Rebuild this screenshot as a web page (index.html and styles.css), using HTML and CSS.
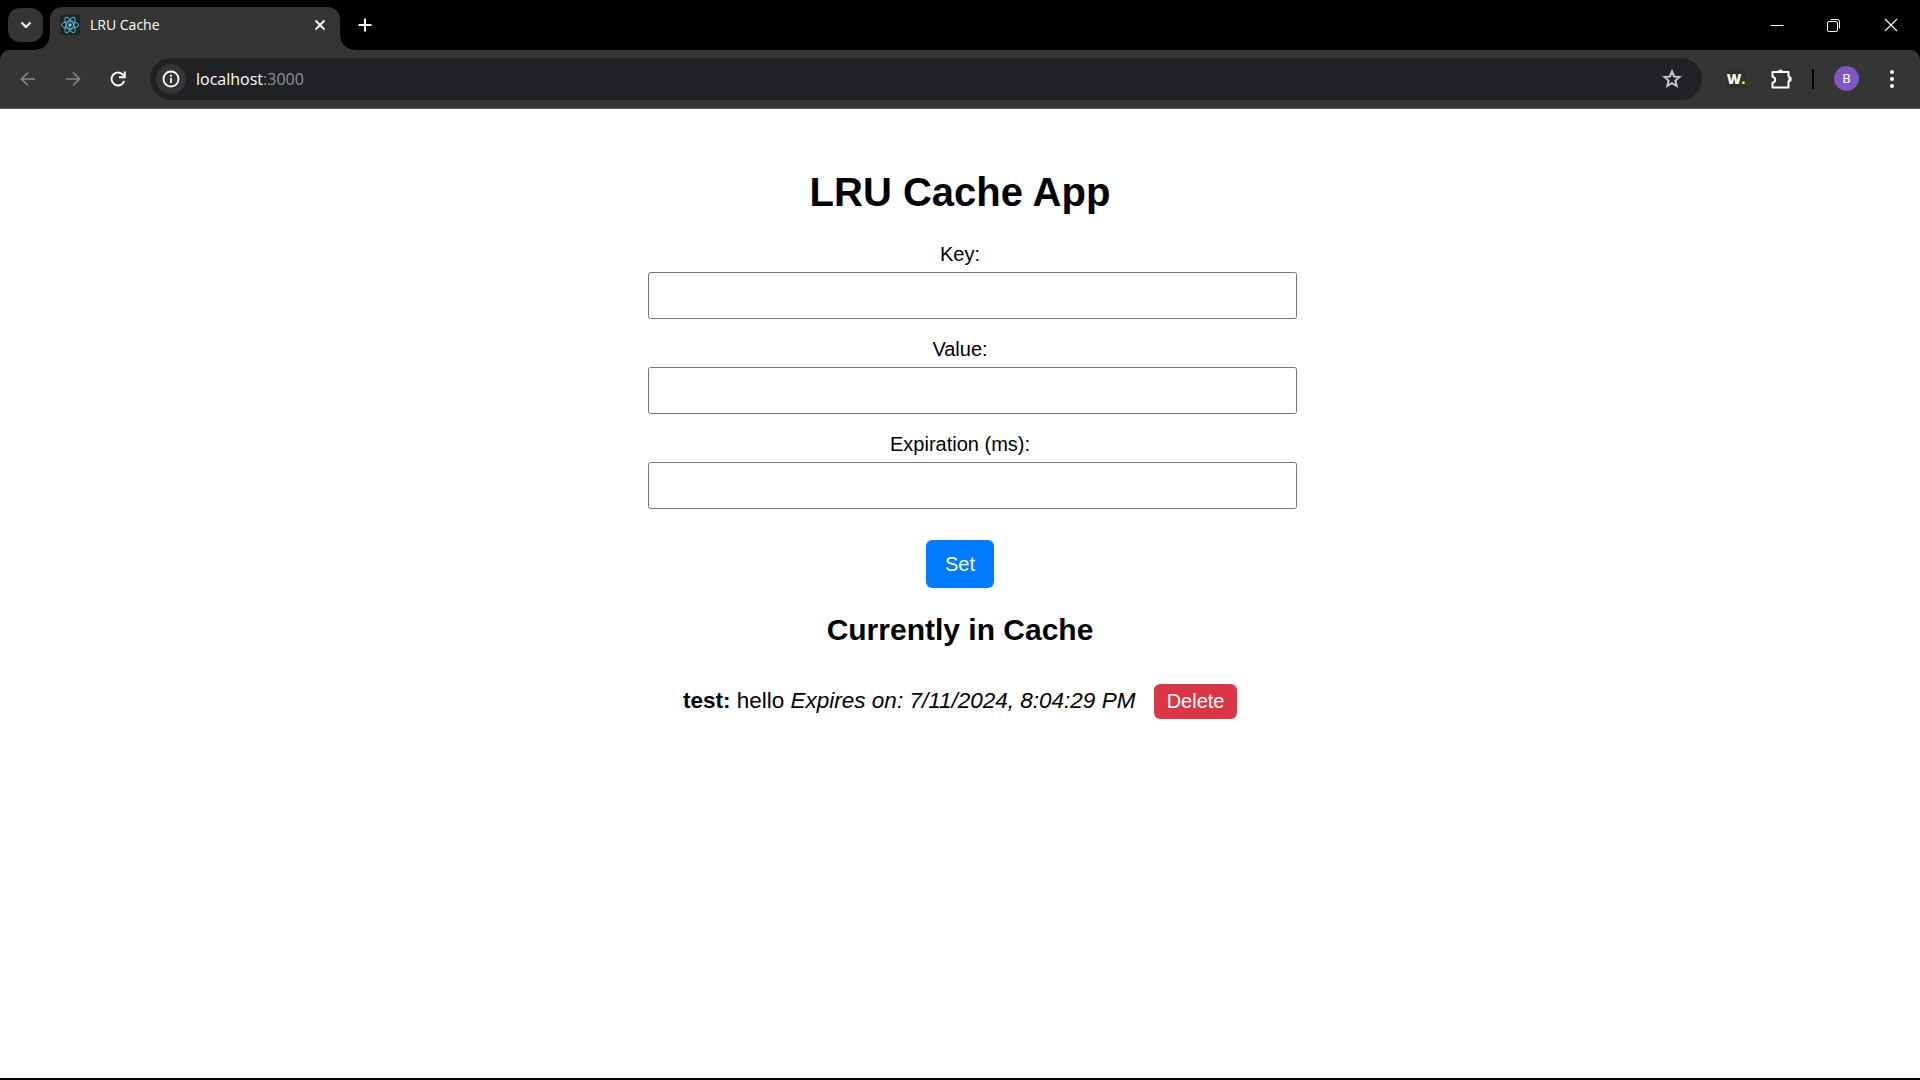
FILE: index.html
```html
<!DOCTYPE html>
<html lang="en">
<head>
<meta charset="utf-8">
<title>LRU Cache</title>
<link rel="stylesheet" href="styles.css">
</head>
<body>
<header class="browser">
  <div class="tabstrip">
    <button class="tab-search" aria-label="Search tabs">
      <svg width="12" height="8" viewBox="0 0 12 8"><path d="M1.5 1.5 6 6l4.500-4.500" fill="none" stroke="#fff" stroke-width="2.200"/></svg>
    </button>
    <div class="tab">
      <svg class="favicon" width="20" height="20" viewBox="0 0 20 20">
        <rect width="20" height="20" rx="1" fill="#222426"/>
        <g fill="none" stroke="#52b4d0" stroke-width="1">
          <ellipse cx="10" cy="10" rx="8.600" ry="3.400"/>
          <ellipse cx="10" cy="10" rx="8.600" ry="3.400" transform="rotate(60 10 10)"/>
          <ellipse cx="10" cy="10" rx="8.600" ry="3.400" transform="rotate(120 10 10)"/>
        </g>
        <circle cx="10" cy="10" r="1.700" fill="#61dafb"/>
      </svg>
      <span class="tab-title">LRU Cache</span>
      <button class="icon-button" aria-label="Close tab">
        <svg width="12" height="12" viewBox="0 0 12 12"><path d="M1.500 1.500l9 9M10.500 1.500l-9 9" stroke="#fff" stroke-width="1.800"/></svg>
      </button>
    </div>
    <button class="icon-button new-tab" aria-label="New tab">
      <svg width="14" height="14" viewBox="0 0 14 14"><path d="M7 .5v13M.5 7h13" stroke="#fff" stroke-width="2"/></svg>
    </button>
    <div class="window-controls">
      <button class="icon-button" aria-label="Minimize">
        <svg width="14" height="14" viewBox="0 0 14 14"><path d="M.5 7.500h13" stroke="#fff"/></svg>
      </button>
      <button class="icon-button" aria-label="Restore">
        <svg width="14" height="14" viewBox="0 0 14 14" fill="none" stroke="#fff"><rect x=".5" y="3.500" width="10" height="10" rx="1.500"/><path d="M3.500 1.500H10.500a2 2 0 0 1 2 2v7"/></svg>
      </button>
      <button class="icon-button" aria-label="Close">
        <svg width="14" height="14" viewBox="0 0 14 14"><path d="M1 1l12 12M13 1 1 13" stroke="#fff" stroke-width="1.100"/></svg>
      </button>
    </div>
  </div>
  <div class="toolbar">
    <nav class="history">
      <button class="icon-button" aria-label="Back">
        <svg width="16" height="16" viewBox="0 0 16 16" fill="none" stroke="#858585" stroke-width="1.700"><path d="M15 8H2M8 1.500 1.500 8 8 14.500"/></svg>
      </button>
      <button class="icon-button" aria-label="Forward">
        <svg width="16" height="16" viewBox="0 0 16 16" fill="none" stroke="#858585" stroke-width="1.700"><path d="M1 8h13M8 1.500 14.500 8 8 14.500"/></svg>
      </button>
      <button class="icon-button" aria-label="Reload">
        <svg width="18" height="18" viewBox="0 0 18 18" fill="none" stroke="#fff" stroke-width="2"><path d="M15.200 11A6.500 6.500 0 1 1 14 4.700l1.500 1.800"/><path d="M15.800 1.500v5.700H10" /></svg>
      </button>
    </nav>
    <div class="address">
      <button class="site-info" aria-label="Site information">
        <svg width="18" height="18" viewBox="0 0 18 18"><circle cx="9" cy="9" r="7.500" fill="none" stroke="#fff" stroke-width="1.800"/><path d="M9 8v5M9 4.800v1.900" stroke="#fff" stroke-width="1.800"/></svg>
      </button>
      <span class="url">localhost<span class="port">:3000</span></span>
      <button class="icon-button" aria-label="Bookmark this tab">
        <svg width="20" height="20" viewBox="0 0 20 20"><path d="M10 2.500l2.100 5 5.400.5-4.100 3.600 1.300 5.400L10 14.200l-4.700 2.800 1.300-5.400L2.500 8l5.400-.5z" fill="none" stroke="#c7c7c7" stroke-width="2"/></svg>
      </button>
    </div>
    <div class="extensions">
      <button class="icon-button extension" aria-label="W extension">W<span class="dot">.</span></button>
      <button class="icon-button" aria-label="Extensions">
        <svg width="22" height="22" viewBox="0 0 22 22"><path d="M2.500 4h16v4.800a2.200 2.200 0 0 1 0 4.400V19.500h-16v-4.800c3.600-.6 3.600-5.400 0-6z" fill="none" stroke="#fff" stroke-width="2" stroke-linejoin="round"/><path d="M8 4a2.500 2.500 0 0 1 5 0zM18.500 8.500a2.500 2.500 0 0 1 0 5z" fill="#fff"/></svg>
      </button>
      <span class="divider"></span>
      <button class="icon-button avatar" aria-label="Profile">B</button>
      <button class="icon-button" aria-label="Menu">
        <svg width="6" height="20" viewBox="0 0 6 20" fill="#fff"><circle cx="3" cy="3" r="2"/><circle cx="3" cy="10" r="2"/><circle cx="3" cy="17" r="2"/></svg>
      </button>
    </div>
  </div>
</header>
<main class="app">
  <h1>LRU Cache App</h1>
  <form class="cache-form">
    <div class="field"><label for="key">Key:</label><input id="key" type="text"></div>
    <div class="field"><label for="value">Value:</label><input id="value" type="text"></div>
    <div class="field"><label for="expiration">Expiration (ms):</label><input id="expiration" type="text"></div>
    <button class="set" type="button">Set</button>
  </form>
  <h2>Currently in Cache</h2>
  <ul class="entries">
    <li><strong>test:</strong> hello <em>Expires on: 7/11/2024, 8:04:29 PM</em> <button class="delete" type="button">Delete</button></li>
  </ul>
</main>
</body>
</html>
```
FILE: styles.css
```css
* { box-sizing: border-box; }

body {
  margin: 0;
  min-height: 100vh;
  display: flex;
  flex-direction: column;
  background: #fff;
  border-bottom: 2px solid #000;
  font-family: "Liberation Sans", Arial, sans-serif;
}

button { font-family: inherit; border: 0; cursor: pointer; }

/* Browser frame */
.browser {
  background: #000;
  color: #fff;
  font-family: "Open Sans", "Noto Sans", sans-serif;
}

.icon-button {
  display: flex;
  flex: none;
  align-items: center;
  justify-content: center;
  padding: 0;
  background: none;
  color: #fff;
}

.tabstrip {
  display: flex;
  align-items: center;
  height: 50px;
  padding: 0 1px 0 8px;
}

.tab-search {
  display: flex;
  align-items: center;
  justify-content: center;
  width: 35px;
  height: 34px;
  margin-right: 7px;
  padding: 0;
  border-radius: 12px;
  background: #353535;
}

.tab {
  position: relative;
  align-self: flex-end;
  display: flex;
  align-items: center;
  gap: 10px;
  width: 290px;
  height: 43px;
  padding: 0 14px 7px 10px;
  border-radius: 12px 12px 0 0;
  background: #353535;
}

/* Curved feet joining the tab to the toolbar */
.tab::before,
.tab::after {
  content: "";
  position: absolute;
  bottom: 0;
  width: 14px;
  height: 14px;
}
.tab::before { right: 100%; background: radial-gradient(circle at 0 0, transparent 13px, #353535 14px); }
.tab::after { left: 100%; background: radial-gradient(circle at 100% 0, transparent 13px, #353535 14px); }

.tab-title { flex: 1; font-size: 14px; line-height: 20px; }

.new-tab { width: 50px; height: 34px; }

.window-controls { display: flex; margin-left: auto; }
.window-controls .icon-button { width: 57px; height: 50px; }

.toolbar {
  display: flex;
  align-items: center;
  height: 59px;
  padding: 0 16px 1px 11px;
  border-radius: 10px 10px 0 0;
  border-bottom: 1px solid #5c5c5c;
  background: #353535;
}

.history { display: flex; gap: 12px; margin-right: 16px; }
.history .icon-button { width: 33px; height: 34px; }

.address {
  flex: 1;
  display: flex;
  align-items: center;
  height: 42px;
  padding: 0 20px 0 6px;
  border-radius: 21px;
  background: #202124;
}

.site-info {
  display: flex;
  align-items: center;
  justify-content: center;
  width: 30px;
  height: 30px;
  margin-right: 10px;
  padding: 0;
  border-radius: 50%;
  background: #353535;
}

.url { flex: 1; font-size: 16px; line-height: 24px; }
.port { color: #8e9196; }

.extensions { display: flex; align-items: center; margin-left: 24px; }
.extension {
  width: 20px;
  height: 20px;
  margin-right: 24px;
  background: #303030;
  font-size: 14px;
  font-weight: 800;
}
.dot { color: #f4ee2a; }
.divider { width: 2px; height: 20px; margin: 0 20px; background: #000; }
.avatar {
  width: 25px;
  height: 25px;
  margin-right: 20px;
  border-radius: 50%;
  background: #7e57c2;
  font-family: Roboto, sans-serif;
  font-size: 13px;
}
.extensions .icon-button:last-child { width: 25px; height: 34px; }

/* Application page, shown at the browser's 125% zoom */
.app {
  zoom: 1.25;
  width: 100%;
  max-width: 500px;
  margin: 49px auto;
  text-align: center;
}

.app h1 { margin: 0 0 22px; font-size: 32px; }
.app h2 { margin: 20px 0 19px; font-size: 24px; }

.field { margin-bottom: 15px; }
.field label { display: block; margin-bottom: 5px; }
.field input {
  box-sizing: content-box;
  width: 100%;
  padding: 10px 9px;
  border: 1px solid #767676;
  border-radius: 2px;
}

.set,
.delete {
  border-radius: 5px;
  color: #fff;
  font-size: 16px;
}
.set { margin-top: 10px; padding: 10px 15px; background: #007bff; }
.delete { margin-left: 10px; padding: 5px 10px; background: #dc3545; }

.entries { margin: 0; padding: 0; list-style: none; }
.entries li { padding: 10px 0; font-size: 18px; white-space: nowrap; }
```
